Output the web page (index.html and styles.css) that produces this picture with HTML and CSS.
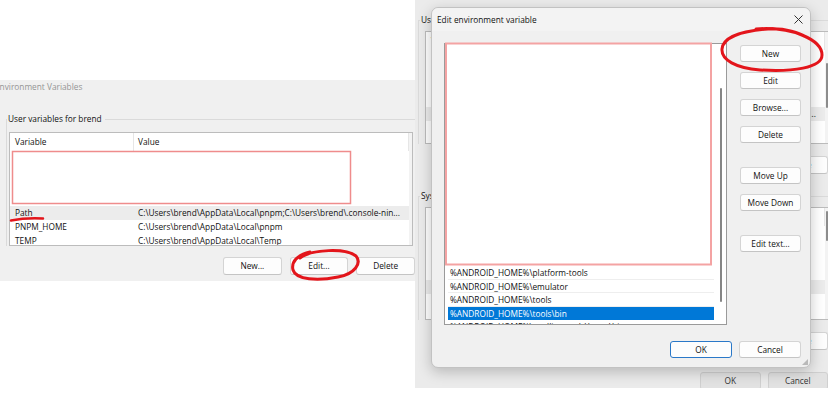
FILE: index.html
```html
<!DOCTYPE html>
<html lang="en">
<head>
  <meta charset="UTF-8">
  <title>Edit environment variable</title>
  <link rel="stylesheet" href="styles.css">
</head>
<body>
  <div class="canvas">

    <!-- left crop: Environment Variables dialog -->
    <section class="shot shot-left">
      <div class="win-title">Environment Variables</div>
      <div class="group">
        <div class="group-title">User variables for brend</div>
        <div class="listview">
          <div class="lv-head">
            <div class="col-var">Variable</div>
            <div class="col-val">Value</div>
          </div>
          <div class="lv-body">
            <div class="lv-blank"></div>
            <div class="lv-row active"><div class="col-var">Path</div><div class="col-val">C:\Users\brend\AppData\Local\pnpm;C:\Users\brend\.console-nin...</div></div>
            <div class="lv-row"><div class="col-var">PNPM_HOME</div><div class="col-val">C:\Users\brend\AppData\Local\pnpm</div></div>
            <div class="lv-row"><div class="col-var">TEMP</div><div class="col-val">C:\Users\brend\AppData\Local\Temp</div></div>
          </div>
        </div>
      </div>
      <div class="btn-row">
        <button class="btn">New...</button>
        <button class="btn">Edit...</button>
        <button class="btn">Delete</button>
      </div>
    </section>

    <!-- right crop: same dialog behind the Edit dialog -->
    <section class="shot shot-right">
      <div class="bg-dialog">
        <div class="group group-user">
          <div class="group-title">User variables for brend</div>
          <div class="listview">
            <div class="lv-head">
              <div class="col-var">Variable</div>
              <div class="col-val">Value</div>
            </div>
            <div class="lv-body">
              <div class="lv-blank"></div>
              <div class="lv-row active"><div class="col-var">Path</div><div class="col-val">C:\Users\brend\AppData\Local\pnpm;C:\Users\brend\.console-nin...</div></div>
            </div>
            <div class="lv-thumb thumb-user"></div>
          </div>
        </div>
        <div class="btn-row btn-row-bg">
          <button class="btn">New...</button>
          <button class="btn">Edit...</button>
          <button class="btn">Delete</button>
        </div>
        <div class="group group-sys">
          <div class="group-title">System variables</div>
          <div class="listview">
            <div class="lv-head"></div>
            <div class="lv-body">
              <div class="lv-blank sys-blank"></div>
              <div class="lv-row active"></div>
            </div>
            <div class="lv-thumb thumb-sys"></div>
          </div>
        </div>
        <div class="btn-row btn-row-bg">
          <button class="btn">New...</button>
          <button class="btn">Edit...</button>
          <button class="btn">Delete</button>
        </div>
        <div class="btn-row btn-row-foot">
          <button class="btn btn-dim">OK</button>
          <button class="btn btn-dim">Cancel</button>
        </div>
      </div>

      <div class="edit-dialog">
        <div class="ed-title">
          <span>Edit environment variable</span>
          <svg class="ed-close" width="9" height="9" viewBox="0 0 9 9">
            <path d="M0.5 0.5 L8.5 8.5 M8.5 0.5 L0.5 8.5" stroke="#333" stroke-width="1" fill="none"/>
          </svg>
        </div>
        <div class="ed-body">
          <div class="ed-list">
            <div class="ed-blank"></div>
            <div class="ed-row">%ANDROID_HOME%\platform-tools</div>
            <div class="ed-row">%ANDROID_HOME%\emulator</div>
            <div class="ed-row">%ANDROID_HOME%\tools</div>
            <div class="ed-row selected">%ANDROID_HOME%\tools\bin</div>
            <div class="ed-row">%ANDROID_HOME%\cmdline-tools\latest\bin</div>
            <div class="ed-scroll"></div>
          </div>
          <div class="ed-side">
            <button class="btn">New</button>
            <button class="btn">Edit</button>
            <button class="btn">Browse...</button>
            <button class="btn">Delete</button>
            <button class="btn gap-before">Move Up</button>
            <button class="btn">Move Down</button>
            <button class="btn gap-before">Edit text...</button>
          </div>
        </div>
        <div class="ed-foot">
          <button class="btn btn-default">OK</button>
          <button class="btn">Cancel</button>
        </div>
      </div>
    </section>

    <!-- red marker annotations drawn over the screenshots -->
    <svg class="marks" width="828" height="394" viewBox="0 0 828 394">
      <rect x="12.5" y="151.5" width="338" height="52" fill="none" stroke="#ef8c8c" stroke-width="1.5"/>
      <rect x="446" y="43.5" width="265" height="221" fill="none" stroke="#f4a3a3" stroke-width="2"/>
      <path d="M11 220.5 Q 26 217.5 43 218.5" fill="none" stroke="#e3151b" stroke-width="2.5" stroke-linecap="round"/>
      <path d="M300 258 C 312 249, 346 248, 356 256 C 362 263, 355 274, 338 277 C 318 281, 296 280, 293 270 C 291 262, 297 255, 310 252" fill="none" stroke="#e3151b" stroke-width="3" stroke-linecap="round"/>
      <path d="M756 29 C 792 26, 822 40, 822 55 C 822 68, 792 72, 760 70 C 736 68, 721 60, 722 49 C 723 38, 740 31, 768 29 C 786 28, 800 33, 806 37" fill="none" stroke="#e3151b" stroke-width="3" stroke-linecap="round"/>
    </svg>
  </div>
</body>
</html>
```

FILE: styles.css
```css
body {
  margin: 0;
  background: #fff;
  font-family: 'Open Sans', 'Noto Sans', sans-serif;
  font-size: 8.3px;
  color: #111;
}

.canvas {
  position: relative;
  width: 828px;
  height: 394px;
  display: flex;
  align-items: flex-start;
  overflow: hidden;
}

.shot {
  position: relative;
  overflow: hidden;
  flex: none;
}

.shot-left {
  width: 415px;
  height: 201px;
  margin-top: 80px;
  background: #f0f0f0;
}

.shot-right {
  width: 413px;
  height: 388px;
  background: #ebebeb;
}

.win-title {
  height: 14px;
  line-height: 14px;
  margin-left: -5px;
  color: #959595;
  white-space: nowrap;
}

/* group box */
.group {
  margin: 25px 0 0 6px;
  border-top: 1px solid #dadada;
  border-left: 1px solid #dadada;
  padding: 0 0 0 2px;
}

.group-title {
  width: max-content;
  margin: -8px 0 0 -2px;
  padding: 0 3px 0 1px;
  line-height: 14px;
  background: #f0f0f0;
  white-space: nowrap;
}

.listview {
  position: relative;
  box-sizing: border-box;
  width: 404px;
  height: 114px;
  margin-top: 6px;
  border: 1px solid #bcbcbc;
  background: #f3f3f3;
  overflow: hidden;
}

.lv-head,
.lv-body {
  margin-right: 3px;
  background: #fff;
}

.lv-head {
  display: flex;
  height: 18px;
  line-height: 18px;
  border-right: 1px solid #e6e6e6;
}

.lv-head .col-var {
  border-right: 1px solid #e6e6e6;
}

.lv-body {
  height: 200px;
}

.lv-blank {
  height: 55px;
}

.lv-row {
  display: flex;
  height: 14px;
  line-height: 14px;
  white-space: nowrap;
}

.lv-row.active {
  background: #ececec;
}

.col-var {
  box-sizing: border-box;
  width: 124px;
  padding-left: 5px;
  flex: none;
}

.col-val {
  padding-left: 4px;
}

.lv-thumb {
  position: absolute;
  right: 0;
  width: 2px;
  background: #8c8c8c;
  border-radius: 1px;
}

/* buttons */
.btn {
  box-sizing: border-box;
  width: 62px;
  height: 18px;
  padding: 0;
  font: inherit;
  line-height: 16px;
  color: #111;
  background: #fdfdfd;
  border: 1px solid #d4d4d4;
  border-bottom-color: #c4c4c4;
  border-radius: 3px;
  text-align: center;
  white-space: nowrap;
}

.btn-row {
  display: flex;
  gap: 8px;
  margin: 11px 0 0 223px;
}

/* background dialog on the right */
.bg-dialog {
  padding-top: 20px;
}

.bg-dialog .group {
  margin: 0 0 0 3px;
}

.bg-dialog .group-title {
  background: #ebebeb;
  margin-left: -1px;
}

.bg-dialog .listview {
  margin: 4px 0 0 4px;
  height: 113px;
}

.group-user .lv-blank {
  height: 57px;
}

.sys-blank {
  height: 54px;
}

.bg-dialog .group-sys {
  margin-top: 22px;
}

.thumb-user {
  top: 31px;
  height: 45px;
}

.thumb-sys {
  top: 3px;
  height: 30px;
}

.btn-row-bg {
  margin-top: 12px;
}

.btn-row-foot {
  margin: 22px 0 0 285px;
  gap: 7px;
}

.btn-dim {
  background: #e2e2e2;
  border-color: #d0d0d0;
  color: #333;
}

/* Edit environment variable dialog, on top */
.edit-dialog {
  position: absolute;
  left: 16px;
  top: 7px;
  box-sizing: border-box;
  width: 380px;
  height: 361px;
  background: #f0f0f0;
  border: 1px solid #c2c2c2;
  border-radius: 7px;
  box-shadow: 0 4px 14px rgba(0, 0, 0, 0.22);
}

.edit-dialog::after {
  content: '';
  position: absolute;
  right: 2px;
  bottom: 2px;
  width: 6px;
  height: 6px;
  background: radial-gradient(circle, #9a9a9a 0.6px, transparent 0.9px) 0 0 / 2px 2px;
  clip-path: polygon(100% 0, 100% 100%, 0 100%);
}

.ed-title {
  display: flex;
  align-items: center;
  justify-content: space-between;
  height: 23px;
  padding: 0 7px 0 5px;
  background: #f3f3f3;
  border-radius: 7px 7px 0 0;
}

.ed-close {
  display: block;
}

.ed-body {
  display: flex;
  gap: 13px;
  padding: 12px 9px 0 12px;
}

.ed-list {
  position: relative;
  box-sizing: border-box;
  width: 283px;
  height: 282px;
  padding: 0 12px 0 3px;
  background: #fff;
  border: 1px solid #9a9a9a;
  overflow: hidden;
}

.ed-blank {
  height: 222px;
}

.ed-row {
  height: 13.5px;
  line-height: 13.5px;
  padding-left: 2px;
  border-bottom: 1px solid #eeeeee;
  box-sizing: border-box;
  white-space: nowrap;
}

.ed-row.selected {
  background: #0078d7;
  color: #fff;
  border-bottom-color: #0078d7;
}

.ed-scroll {
  position: absolute;
  left: 275px;
  top: 44px;
  width: 2px;
  height: 214px;
  background: #858585;
  border-radius: 1px;
}

.ed-side {
  display: flex;
  flex-direction: column;
  gap: 10px;
  margin-top: 2px;
}

.ed-side .btn {
  width: 61px;
  height: 17px;
  line-height: 15px;
}

.ed-side .gap-before {
  margin-top: 14px;
}

.ed-foot {
  display: flex;
  justify-content: flex-end;
  gap: 7px;
  padding: 16px 9px 0;
}

.ed-foot .btn {
  height: 17px;
  line-height: 15px;
}

.btn-default {
  border-color: #2a78c8;
}

.marks {
  position: absolute;
  left: 0;
  top: 0;
  pointer-events: none;
}
```
